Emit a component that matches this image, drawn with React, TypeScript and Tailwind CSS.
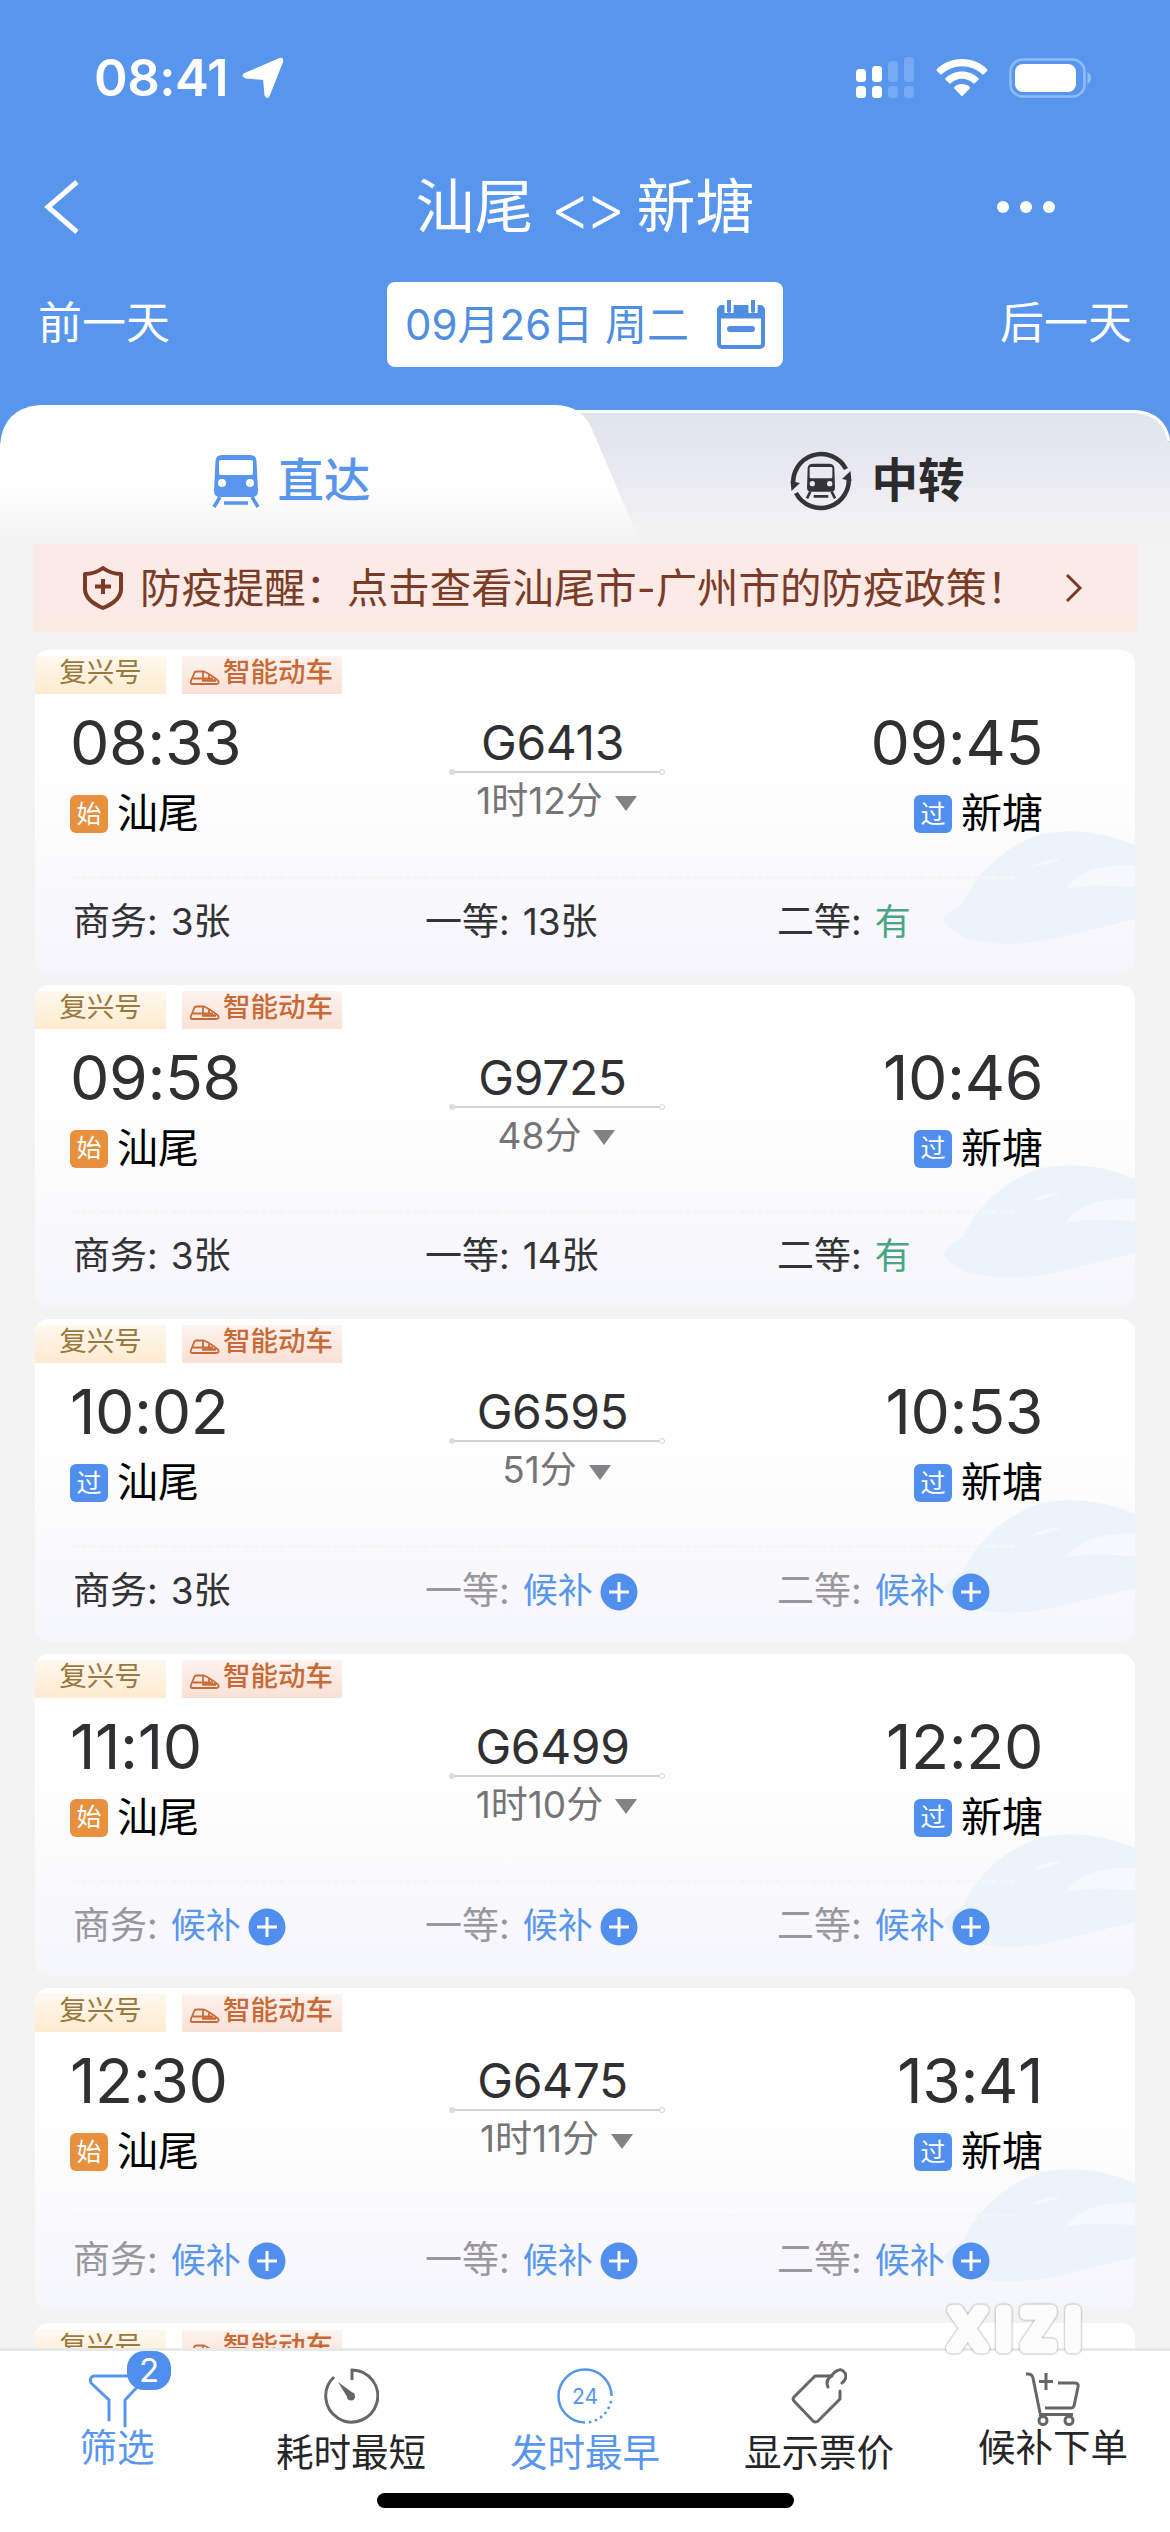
import React from 'react';

interface Seat {
  label: string;
  value: string;
}

interface Train {
  code: string;
  depart: string;
  arrive: string;
  duration: string;
  origin: boolean;
  seats: Seat[];
}

const WAIT = '候补';

const trains: Train[] = [
  {
    code: 'G6413', depart: '08:33', arrive: '09:45', duration: '1时12分', origin: true,
    seats: [{ label: '商务', value: '3张' }, { label: '一等', value: '13张' }, { label: '二等', value: '有' }],
  },
  {
    code: 'G9725', depart: '09:58', arrive: '10:46', duration: '48分', origin: true,
    seats: [{ label: '商务', value: '3张' }, { label: '一等', value: '14张' }, { label: '二等', value: '有' }],
  },
  {
    code: 'G6595', depart: '10:02', arrive: '10:53', duration: '51分', origin: false,
    seats: [{ label: '商务', value: '3张' }, { label: '一等', value: WAIT }, { label: '二等', value: WAIT }],
  },
  {
    code: 'G6499', depart: '11:10', arrive: '12:20', duration: '1时10分', origin: true,
    seats: [{ label: '商务', value: WAIT }, { label: '一等', value: WAIT }, { label: '二等', value: WAIT }],
  },
  {
    code: 'G6475', depart: '12:30', arrive: '13:41', duration: '1时11分', origin: true,
    seats: [{ label: '商务', value: WAIT }, { label: '一等', value: WAIT }, { label: '二等', value: WAIT }],
  },
];

const StatusBar: React.FC = () => (
  <div className="flex h-[156px] items-center justify-between pl-[94px] pr-[79px] text-white">
    <div className="flex items-center gap-[14px]">
      <span className="text-[51px] font-semibold leading-[60px] tracking-[-0.5px]">08:41</span>
      <svg width="42" height="42" viewBox="0 0 42 42">
        <path d="M38 2 Q41 1 40 5 L27 38 Q25.500 42 23.500 38 L22 22 L4 20.500 Q-1 18.500 4 16.500 Z" fill="#fff" stroke="#fff" strokeWidth="2" strokeLinejoin="round" />
      </svg>
    </div>
    <div className="flex items-center">
      <svg width="60" height="42" viewBox="0 0 60 42" fill="#fff">
        <rect x="0" y="12" width="10" height="13" rx="3.500" />
        <rect x="16" y="9" width="10" height="16" rx="3.500" />
        <rect x="32" y="4" width="10" height="21" rx="3.500" opacity="0.180" />
        <rect x="48" y="0" width="10" height="25" rx="3.500" opacity="0.180" />
        <rect x="0" y="29" width="10" height="12" rx="3.500" />
        <rect x="16" y="29" width="10" height="12" rx="3.500" />
        <rect x="32" y="29" width="10" height="12" rx="3.500" opacity="0.180" />
        <rect x="48" y="29" width="10" height="12" rx="3.500" opacity="0.180" />
      </svg>
      <svg className="ml-[20px]" width="52" height="38" viewBox="0 0 52 38" fill="#fff">
        <path d="M26 0 C36 0 44.500 3.800 51 10 Q52 11 51 12 L48 15 Q47 16 46 15 C40.500 10 33.500 7.200 26 7.200 S11.500 10 6 15 Q5 16 4 15 L1 12 Q0 11 1 10 C7.500 3.800 16 0 26 0 Z" />
        <path d="M26 12.500 C32.500 12.500 38 15 42.300 19 Q43.300 20 42.300 21 L39 24 Q38 25 37 24 C34 21.300 30.200 19.700 26 19.700 S18 21.300 15 24 Q14 25 13 24 L9.700 21 Q8.700 20 9.700 19 C14 15 19.500 12.500 26 12.500 Z" />
        <path d="M26 25 C29 25 31.500 26 33.500 27.700 Q34.500 28.700 33.500 29.700 L27 36.500 Q26 37.500 25 36.500 L18.500 29.700 Q17.500 28.700 18.500 27.700 C20.500 26 23 25 26 25 Z" />
      </svg>
      <svg className="ml-[21px]" width="82" height="40" viewBox="0 0 82 40">
        <rect x="1.500" y="1.500" width="74" height="37" rx="12" fill="none" stroke="#8fbcf8" strokeWidth="2.500" />
        <rect x="6" y="6" width="61" height="28" rx="8" fill="#fff" />
        <path d="M78.500 14 Q82 16 82 20 T78.500 26 Z" fill="#8fbcf8" />
      </svg>
    </div>
  </div>
);

const Header: React.FC = () => (
  <header className="h-[405px] bg-[#5896ee] text-white">
    <StatusBar />
    <div className="flex h-[102px] items-center justify-between pl-[44px] pr-[115px]">
      <svg className="w-[210px]" width="210" height="54" viewBox="0 0 210 54" fill="none" stroke="#fff" strokeWidth="5">
        <path d="M33 2 L4 27 L33 52" />
      </svg>
      <div className="flex items-center pl-[71px]">
        <h1 className="flex items-center gap-[17px] whitespace-nowrap text-[59px] leading-[80px]">
          汕尾
          <span className="mt-[2px] text-[62px] font-light tracking-[-6px] [font-feature-settings:'calt'_0]">&lt;&gt;</span>
          新塘
        </h1>
      </div>
      <div className="flex w-[210px] justify-end gap-[11px]">
        <i className="size-[12px] rounded-full bg-white" />
        <i className="size-[12px] rounded-full bg-white" />
        <i className="size-[12px] rounded-full bg-white" />
      </div>
    </div>
    <div className="mt-[24px] flex h-[85px] items-center justify-between px-[38px] text-[44px]">
      <span className="-mt-[4px]">前一天</span>
      <div className="flex h-[85px] w-[396px] items-center justify-between rounded-[8px] bg-white pl-[18px] pr-[17px] text-[42px] text-[#4f8ee0]">
        <span className="whitespace-nowrap">09月26日 周二</span>
        <svg width="50" height="50" viewBox="0 0 50 50" fill="none" stroke="#4f8ee0">
          <rect x="3" y="7" width="44" height="40" rx="3" strokeWidth="4" />
          <path d="M3 13 H47" strokeWidth="11" />
          <path d="M13 1 V13 M37 1 V13" stroke="#fff" strokeWidth="9" />
          <path d="M13 1 V11 M37 1 V11" strokeWidth="4" strokeLinecap="round" />
          <path d="M14 29 H36" strokeWidth="6" strokeLinecap="round" />
        </svg>
      </div>
      <span className="-mt-[4px]">后一天</span>
    </div>
  </header>
);

const TrainGlyph: React.FC<{ color: string; hole: string; size: string }> = ({ color, hole, size }) => (
  <svg className={size} viewBox="0 0 48 54">
    <path d="M10 1 H38 Q44 1 44.500 7 L46 37 Q46 43 40 43 H8 Q2 43 2 37 L3.500 7 Q4 1 10 1 Z" fill={color} />
    <rect x="7" y="6" width="34" height="15" rx="2" fill={hole} />
    <circle cx="10" cy="29" r="4" fill={hole} />
    <circle cx="38" cy="29" r="4" fill={hole} />
    <path d="M8 43 L2 53 M40 43 L46 53 M12 49 H36" stroke={color} strokeWidth="3.500" fill="none" />
  </svg>
);

const Tabs: React.FC = () => (
  <div className="relative h-[139px] bg-[#5896ee]">
    <svg className="absolute inset-0" width="1170" height="139" viewBox="0 0 1170 139" preserveAspectRatio="none">
      <defs>
        <linearGradient id="tabRight" x1="0" y1="0" x2="0" y2="1">
          <stop offset="0" stopColor="#dfe4eb" />
          <stop offset="0.500" stopColor="#e9e9f1" />
          <stop offset="0.850" stopColor="#f2f2f3" />
          <stop offset="1" stopColor="#f3f3f3" />
        </linearGradient>
        <linearGradient id="tabLeft" x1="0" y1="0" x2="0" y2="1">
          <stop offset="0" stopColor="#fff" />
          <stop offset="0.600" stopColor="#fefefe" />
          <stop offset="0.850" stopColor="#f7f7f7" />
          <stop offset="1" stopColor="#f3f3f3" />
        </linearGradient>
      </defs>
      <path d="M500 5 H1134 Q1166 7 1170 38 V139 H500 Z" fill="url(#tabRight)" />
      <path d="M560 6.500 H1134 Q1164 8 1169 36" fill="none" stroke="#fff" strokeWidth="3" />
      <path d="M0 40 Q3 3 40 0 H556 Q581 1 591 22 L641 139 H0 Z" fill="url(#tabLeft)" />
    </svg>
    <div className="relative flex h-[152px] items-center text-[46.500px]">
      <div className="flex w-[582px] items-center justify-center gap-[18px] text-[#5896ee]">
        <TrainGlyph color="#5896ee" hole="#fff" size="h-[54px] w-[48px]" />
        <span className="font-medium">直达</span>
      </div>
      <div className="flex flex-1 items-center justify-center gap-[20px] pl-[2px] text-[#2b2b2d]">
        <svg width="62" height="62" viewBox="0 0 62 62" fill="none">
          <path d="M3.500 36 A28 28 0 0 1 56 19" stroke="#333338" strokeWidth="4.500" />
          <path d="M58.500 26 A28 28 0 0 1 6 43" stroke="#333338" strokeWidth="4.500" />
          <path d="M0.500 31 L1.500 41 L10 33 Z M61.500 31 L60.500 21 L52 29 Z" fill="#333338" />
          <svg x="15" y="13" width="32" height="36" viewBox="0 0 48 54">
            <path d="M12 1 H36 Q43 1 44 7 L45 37 Q45 43 39 43 H9 Q3 43 3 37 L4 7 Q5 1 12 1 Z" fill="#333338" />
            <rect x="7" y="6" width="34" height="17" rx="2" fill="#e9e9f0" />
            <circle cx="11" cy="31" r="4" fill="#e9e9f0" />
            <circle cx="37" cy="31" r="4" fill="#e9e9f0" />
            <path d="M8 43 L3 53 M40 43 L45 53 M13 50 H35" stroke="#333338" strokeWidth="4" />
          </svg>
        </svg>
        <span className="font-bold">中转</span>
      </div>
    </div>
  </div>
);

const Notice: React.FC = () => (
  <div className="mx-[33px] flex h-[88px] items-center bg-linear-to-b from-[#fceae7] from-80% to-[#fcebdf] pl-[50px] pr-[54px] text-[#7b3c27]">
    <svg width="40" height="44" viewBox="0 0 40 44" fill="none" stroke="#7b3c27">
      <path d="M20 2 Q28 8 38 8 V24 Q37 35 20 42 Q3 35 2 24 V8 Q12 8 20 2 Z" strokeWidth="4" strokeLinejoin="round" />
      <path d="M20 13 V28 M12 20.500 H28" strokeWidth="4" />
    </svg>
    <span className="ml-[17px] whitespace-nowrap text-[41.400px]">防疫提醒：点击查看汕尾市-广州市的防疫政策！</span>
    <svg className="ml-auto" width="18" height="30" viewBox="0 0 18 30" fill="none" stroke="#7b3c27" strokeWidth="3">
      <path d="M2 2 L15 15 L2 28" />
    </svg>
  </div>
);

const Tags: React.FC = () => (
  <div className="mt-[6px] flex h-[38px] gap-[16px] text-[27.500px] leading-[32px]">
    <span className="w-[131px] bg-linear-to-b from-[#fef8ee] to-[#fdebcf] text-center text-[#99793f]">复兴号</span>
    <span className="flex w-[160px] items-center justify-end gap-[2px] bg-linear-to-b from-[#fdf3ef] to-[#f9e0d5] pb-[6px] pr-[9px] font-medium text-[#c96a36]">
      <svg className="mt-[12px]" width="32" height="16" viewBox="0 0 32 16" fill="none" stroke="#c96a36" strokeWidth="1.800" strokeLinejoin="round">
        <path d="M2 11 L5.500 2.500 Q6 1.500 8 1.500 H15 Q21 4 29 10.500 Q31 14 27 14 H3 Q1 14 2 11 Z" />
        <path d="M4 8.500 H24 M14 2 V8.500 M20 5 V8.500" />
        <path d="M13 10.500 H27" strokeWidth="2.500" />
      </svg>
      智能动车
    </span>
  </div>
);

const Station: React.FC<{ name: string; origin?: boolean }> = ({ name, origin }) => (
  <div className="flex items-center gap-[9px] text-[41px] leading-[50px] text-black">
    <span className={`mt-[2px] flex size-[38px] items-center justify-center rounded-[6px] text-[25px] leading-none text-white ${origin ? 'bg-[#e7913f]' : 'bg-[#508fee]'}`}>
      {origin ? '始' : '过'}
    </span>
    {name}
  </div>
);

const SeatCell: React.FC<{ seat: Seat }> = ({ seat }) => {
  const waiting = seat.value === WAIT;
  return (
    <div className={`flex w-[352px] items-center whitespace-nowrap text-[37px] ${waiting ? 'text-[#98989c]' : 'text-[#333336]'}`}>
      <span>{seat.label}:</span>
      <span className={`ml-[13px] ${waiting ? 'text-[35px] text-[#5896ee]' : seat.value === '有' ? 'text-[36px] text-[#4aa583]' : 'text-[37px]'}`}>{seat.value}</span>
      {waiting && (
        <svg className="ml-[7px] mt-[3px]" width="38" height="38" viewBox="0 0 38 38">
          <circle cx="19" cy="19" r="18.500" fill="#508fee" />
          <path d="M19 9 V29 M9 19 H29" stroke="#fff" strokeWidth="3" />
        </svg>
      )}
    </div>
  );
};

const CardWave: React.FC = () => (
  <svg className="absolute bottom-[26px] right-0" width="192" height="116" viewBox="0 0 192 116">
    <path d="M0 88 Q8 78 20 72 Q44 22 98 3 Q145 -6 192 14 V38 Q150 34 128 54 Q160 54 192 56 V88 Q150 98 110 108 Q60 118 20 106 Q6 98 0 88 Z" fill="#ebf3fb" />
    <path d="M192 34 Q140 32 122 58 Q155 52 192 54 Z" fill="#f5f9fd" />
    <path d="M88 36 Q104 26 118 28 Q104 34 88 36 Z" fill="#f5f9fd" />
  </svg>
);

const TrainCard: React.FC<{ train: Train }> = ({ train }) => (
  <div className="relative h-[322.600px] shrink-0 overflow-hidden rounded-[14px] bg-linear-to-b from-white from-30% via-[#fbfbfc] via-60% to-[#f5f5fd]">
    <CardWave />
    <Tags />
    <div className="relative flex h-[182px] justify-between pl-[35px] pr-[92px] pt-[12px] text-[#303033]">
      <div className="w-[240px]">
        <div className="pt-[1px] text-[62.500px] leading-[70px] tracking-[-0.4px] [font-kerning:none]">{train.depart}</div>
        <div className="mt-[11px]"><Station name="汕尾" origin={train.origin} /></div>
      </div>
      <div className="flex w-[220px] flex-col items-center pt-[10px]">
        <div className="-ml-[8px] text-[48px] leading-[53px] tracking-[-0.4px]">{train.code}</div>
        <div className="flex w-[216px] items-center">
          <i className="size-[6px] rounded-full bg-[#dddddd]" />
          <i className="h-[2px] flex-1 bg-[#d2d2d4]" />
          <i className="size-[6px] rounded-full border border-[#d2d2d4] bg-white" />
        </div>
        <div className="flex items-center gap-[12px] text-[37px] leading-[51px] text-[#757577]">
          {train.duration}
          <svg className="mt-[5px]" width="22" height="15" viewBox="0 0 22 15">
            <path d="M0 0 H22 L11 15 Z" fill="#828284" />
          </svg>
        </div>
      </div>
      <div className="flex w-[240px] flex-col items-end">
        <div className="pt-[1px] text-[62.500px] leading-[70px] tracking-[-0.4px] [font-kerning:none]">{train.arrive}</div>
        <div className="mt-[11px]"><Station name="新塘" /></div>
      </div>
    </div>
    <div className="relative ml-[37px] mr-[120px] border-t-[3px] border-dashed border-[#f6f6f7]" />
    <div className="relative flex h-[85px] items-center pl-[38px]">
      {train.seats.map((seat) => <SeatCell key={seat.label} seat={seat} />)}
    </div>
  </div>
);

const FilterIcon = () => (
  <svg width="56" height="56" viewBox="0 0 56 56" fill="none" stroke="#5896ee" strokeWidth="3" strokeLinecap="round">
    <path d="M20 48 V28 L2 11 Q0 5 5 4 H50 Q55 5 52 11 L36 28 V54" />
  </svg>
);

const TimerIcon = () => (
  <svg width="56" height="56" viewBox="0 0 56 56" fill="none" stroke="#666" strokeWidth="3">
    <path d="M29 12 V2 A26 26 0 1 1 11 9" />
    <circle cx="28" cy="28.500" r="4" fill="#666" stroke="none" />
    <path d="M15 14 L31.500 26 L26 32 Z" fill="#666" stroke="none" />
  </svg>
);

const EarlyIcon = () => (
  <svg width="56" height="56" viewBox="0 0 56 56" fill="none" stroke="#5896ee" strokeWidth="2.500">
    <path d="M28 54.500 A26.500 26.500 0 1 1 54.500 28" />
    <path d="M54 33 A26.500 26.500 0 0 1 30 54.500" strokeDasharray="2.500 3.500" />
    <text x="28" y="36" textAnchor="middle" fontSize="21" fill="#5896ee" stroke="none">24</text>
  </svg>
);

const PriceIcon = () => (
  <svg width="56" height="56" viewBox="0 0 56 56" fill="none" stroke="#666" strokeWidth="3" strokeLinejoin="round" strokeLinecap="round">
    <path d="M41 8 H24 L3 29 Q1 31 3 33 L22 53 Q25 55 27 53 L49 31 V23" />
    <path d="M37 19 Q34 13 40 8 L44 4 Q50 -1 54 5 Q57 10 51 15" />
  </svg>
);

const CartIcon = () => (
  <svg width="56" height="56" viewBox="0 0 56 56" fill="none" stroke="#666" strokeWidth="3">
    <path d="M1 2 H3 Q7 2 8 6 L15 41 M33 11 H50 Q54 11 53 15 L49 34 Q48 36 46 36 H20 M14 42.500 H48" />
    <path d="M21 1 V18 M14 9.500 H28" />
    <circle cx="18" cy="48.500" r="4" />
    <circle cx="44" cy="48.500" r="4" />
  </svg>
);

const navItems = [
  { label: '筛选', Icon: FilterIcon, active: true, lift: true, badge: '2' },
  { label: '耗时最短', Icon: TimerIcon },
  { label: '发时最早', Icon: EarlyIcon, active: true },
  { label: '显示票价', Icon: PriceIcon },
  { label: '候补下单', Icon: CartIcon, lift: true },
];

const BottomNav: React.FC = () => (
  <nav className="relative h-[184px] shrink-0 border-t-[3px] border-[#e9e9ea] bg-white">
    <div className="grid h-[142px] grid-cols-5">
      {navItems.map(({ label, Icon, active, lift, badge }) => (
        <div key={label} className={`relative flex flex-col items-center text-[37.500px] ${active ? 'text-[#5896ee]' : 'text-[#262628]'} ${lift ? 'pt-[21px]' : 'pt-[17px]'}`}>
          <Icon />
          <span className={`leading-[50px] ${lift ? 'mt-[-5px]' : 'mt-[4px]'}`}>{label}</span>
          {badge && (
            <span className="absolute left-[127px] top-0 flex h-[39px] w-[44px] items-center justify-center rounded-[17px] bg-[#508fee] text-[33px] text-white">{badge}</span>
          )}
        </div>
      ))}
    </div>
    <div className="mx-auto h-[15px] w-[417px] rounded-full bg-black" />
    <svg className="absolute left-[936px] top-[-56px] drop-shadow-[0_0_1px_#888888]" width="160" height="68" viewBox="0 0 160 68">
      <text x="14" y="52.500" fontSize="52" fontWeight="400" textLength="130" fill="#fbfbfb" stroke="#fbfbfb" strokeWidth="11" strokeLinejoin="round" strokeLinecap="round">XIZI</text>
    </svg>
  </nav>
);

const App: React.FC = () => {
  return (
    <div className="flex h-[2532px] w-[1170px] flex-col overflow-hidden bg-[#f3f3f3] font-['Inter','Noto_Sans_CJK_SC',sans-serif]">
      <Header />
      <Tabs />
      <Notice />
      <main className="mx-[35px] mt-[18px] flex min-h-0 flex-1 flex-col gap-[12px] overflow-hidden">
        {trains.map((train) => <TrainCard key={train.code} train={train} />)}
        {/* next result, cut off by the toolbar */}
        <div className="h-[60px] shrink-0 rounded-t-[14px] bg-white pt-[1px]">
          <Tags />
        </div>
      </main>
      <BottomNav />
    </div>
  );
};

export default App;
